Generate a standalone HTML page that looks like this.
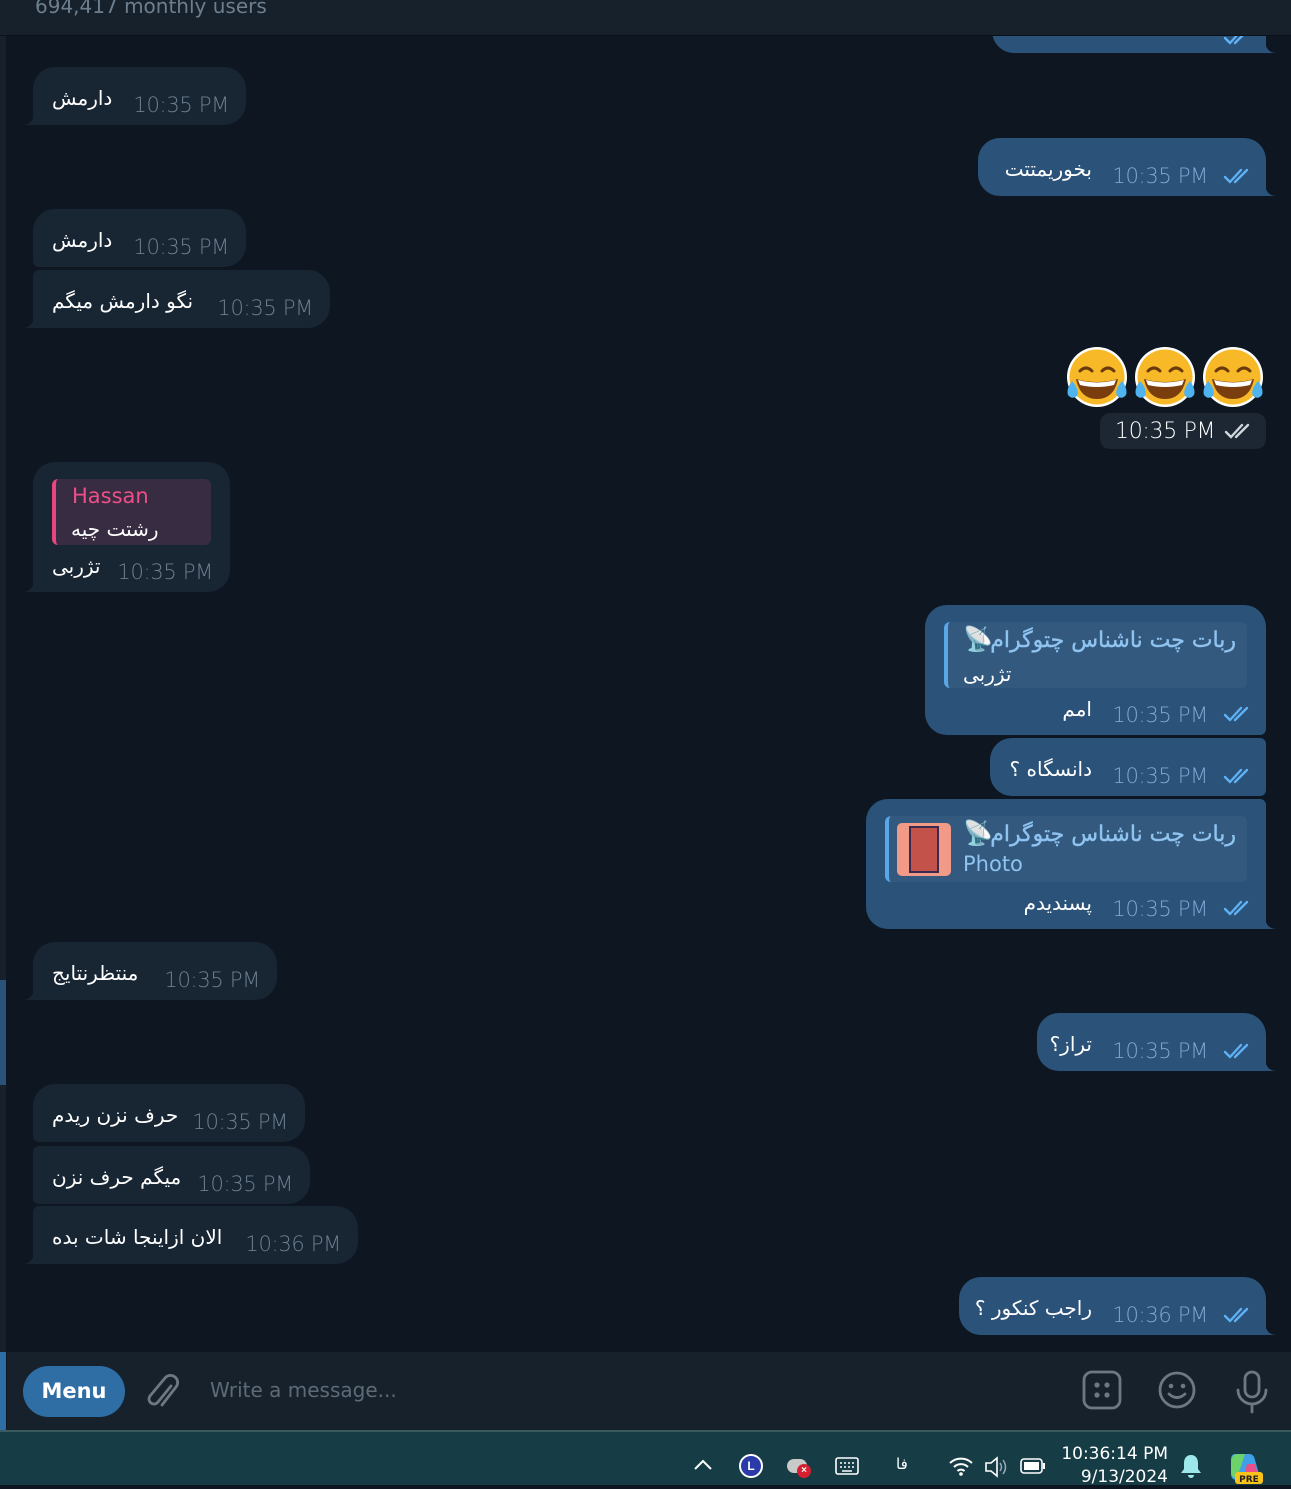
<!DOCTYPE html>
<html><head><meta charset="utf-8"><style>
*{margin:0;padding:0;box-sizing:border-box}
body{width:1291px;height:1485px;background:#0e1621;position:relative;overflow:hidden;font-family:"Liberation Sans","DejaVu Sans",sans-serif}
.b{position:absolute;border-radius:22px 22px 22px 0;background:#182533}
.b.o{background:#2b5278;border-radius:22px 22px 0 22px}
.tl{position:absolute;left:-11px;bottom:0;width:12px;height:14px}
.tr{position:absolute;right:-11px;bottom:0;width:12px;height:14px}
.t{position:absolute;color:#fff;font-size:20px;line-height:26px;direction:rtl;white-space:nowrap;font-family:"DejaVu Sans",sans-serif}
.tm{position:absolute;color:#6d7f8f;font-size:21px;line-height:26px;white-space:nowrap;font-family:"DejaVu Sans",sans-serif;font-weight:300;letter-spacing:-0.3px}
.o .tm{color:#7da8d3}
.ck{position:absolute;right:11px;width:32px;height:20px}
.rp{position:absolute;background:#33597f;border-radius:6px;border-left:4px solid #5aa7e8}
.rt{position:absolute;color:#8fc3f0;font-size:22px;line-height:26px;direction:rtl;white-space:nowrap;font-family:"DejaVu Sans",sans-serif;-webkit-text-stroke:0.4px #8fc3f0}
.sat{position:absolute;font-size:24px;line-height:26px}
</style></head><body>
<div style="position:absolute;left:0;top:36px;width:6px;height:1396px;background:#17212b"></div>
<div style="position:absolute;left:0;top:980px;width:6px;height:105px;background:#2b5278"></div>

<svg width="0" height="0" style="position:absolute"><defs>
<symbol id="ck" viewBox="0 0 32 20"><path d="M2 11l5 5L18 4M12 16L24 4" fill="none" stroke="#5fb1f5" stroke-width="2.4" stroke-linecap="round" stroke-linejoin="round"/></symbol>
</defs></svg>

<div class="b o" style="left:992px;top:10px;width:274px;height:43px;border-radius:0 0 0 22px">
<svg class="tr" viewBox="0 0 12 14"><path d="M0 0Q0 14 12 14L0 14Z" fill="#2b5278"/></svg>
<svg class="ck" style="top:17px"><use href="#ck"/></svg></div>
<div style="position:absolute;left:0;top:0;width:1291px;height:36px;background:#17212b;border-bottom:1px solid #0b1118"></div>
<div style="position:absolute;left:35px;top:-6px;color:#6d7f8f;font-size:20px;font-family:'DejaVu Sans',sans-serif">694,417 monthly users</div>

<div class="b" style="left:33px;top:67px;width:213px;height:58px"><svg class="tl" viewBox="0 0 12 14"><path d="M12 0Q12 14 0 14L12 14Z" fill="#182533"/></svg>
<div class="t" style="left:19px;top:18px">دارمش</div><div class="tm" style="right:17px;top:25px">10:35 PM</div></div>

<div class="b o" style="left:978px;top:138px;width:288px;height:58px"><svg class="tr" viewBox="0 0 12 14"><path d="M0 0Q0 14 12 14L0 14Z" fill="#2b5278"/></svg>
<div class="t" style="right:174px;top:18px">بخوریمتتت</div><div class="tm" style="right:58px;top:25px">10:35 PM</div><svg class="ck" style="top:28px"><use href="#ck"/></svg></div>

<div class="b" style="left:33px;top:209px;width:213px;height:58px;border-radius:22px 22px 22px 6px">
<div class="t" style="left:19px;top:18px">دارمش</div><div class="tm" style="right:17px;top:25px">10:35 PM</div></div>
<div class="b" style="left:33px;top:270px;width:297px;height:58px;border-radius:6px 22px 22px 0"><svg class="tl" viewBox="0 0 12 14"><path d="M12 0Q12 14 0 14L12 14Z" fill="#182533"/></svg>
<div class="t" style="left:19px;top:18px">نگو دارمش میگم</div><div class="tm" style="right:17px;top:25px">10:35 PM</div></div>

<svg style="position:absolute;left:1064px;top:345px" width="204" height="64" viewBox="0 0 204 64">
<g id="em"><circle cx="33" cy="32" r="30" fill="#fff"/><circle cx="33" cy="32" r="27.5" fill="#f7b928"/>
<path d="M16 26q6-6 12 0M38 26q6-6 12 0" stroke="#6b3a0c" stroke-width="3" fill="none" stroke-linecap="round"/>
<path d="M12 34q21 6 42 0q-4 20-21 20t-21-20z" fill="#7a3e0e"/><path d="M14 35q19 5 38 0l-2 5q-17 4-34 0z" fill="#fff"/>
<path d="M8 36q-6 8-4 14 4 5 9 1 3-6-5-15z M58 36q6 8 4 14-4 5-9 1-3-6 5-15z" fill="#4fb3f0"/></g>
<use href="#em" x="68"/><use href="#em" x="136"/></svg>
<div style="position:absolute;left:1100px;top:413px;width:166px;height:36px;background:#1c2733;border-radius:10px"></div>
<div class="tm" style="left:1115px;top:419px;color:#fff;font-size:22px">10:35 PM</div>
<svg style="position:absolute;left:1224px;top:421px" width="32" height="20"><path d="M2 11l5 5L18 4M12 16L24 4" fill="none" stroke="#cfd6dc" stroke-width="2.4" stroke-linecap="round"/></svg>

<div class="b" style="left:33px;top:462px;width:197px;height:130px"><svg class="tl" viewBox="0 0 12 14"><path d="M12 0Q12 14 0 14L12 14Z" fill="#182533"/></svg>
<div class="rp" style="left:19px;top:17px;width:159px;height:66px;background:#372c41;border-left-color:#e9457e"></div>
<div style="position:absolute;left:39px;top:22px;color:#ee4f88;font-size:21px;font-family:'DejaVu Sans',sans-serif">Hassan</div>
<div class="t" style="left:38px;top:54px">رشتت چیه</div>
<div class="t" style="left:19px;top:91px">تژربی</div><div class="tm" style="right:17px;top:97px">10:35 PM</div></div>

<div class="b o" style="left:925px;top:605px;width:341px;height:130px;border-radius:22px 22px 6px 22px">
<div class="rp" style="left:19px;top:17px;width:303px;height:66px"></div>
<div class="rt" style="right:30px;top:23px">ربات چت ناشناس چتوگرام</div>
<div class="sat" style="left:38px;top:22px">📡</div>
<div class="t" style="left:38px;top:56px">تژربی</div>
<div class="t" style="right:174px;top:91px">امم</div><div class="tm" style="right:58px;top:97px">10:35 PM</div><svg class="ck" style="top:99px"><use href="#ck"/></svg></div>
<div class="b o" style="left:990px;top:738px;width:276px;height:58px;border-radius:22px 6px 6px 22px">
<div class="t" style="right:174px;top:18px">دانسگاه ؟</div><div class="tm" style="right:58px;top:25px">10:35 PM</div><svg class="ck" style="top:28px"><use href="#ck"/></svg></div>
<div class="b o" style="left:866px;top:799px;width:400px;height:130px;border-radius:22px 6px 0 22px"><svg class="tr" viewBox="0 0 12 14"><path d="M0 0Q0 14 12 14L0 14Z" fill="#2b5278"/></svg>
<div class="rp" style="left:19px;top:17px;width:362px;height:66px"></div>
<div style="position:absolute;left:31px;top:24px;width:54px;height:53px;border-radius:5px;background:#f29a88;overflow:hidden"><div style="margin:3px 12px;height:47px;background:#c2524a;border:2px solid #3a2a50"></div></div>
<div class="rt" style="right:30px;top:23px">ربات چت ناشناس چتوگرام</div>
<div class="sat" style="left:97px;top:22px">📡</div>
<div style="position:absolute;left:97px;top:53px;color:#8fc3f0;font-size:21px;font-family:'DejaVu Sans',sans-serif">Photo</div>
<div class="t" style="right:174px;top:91px">پسندیدم</div><div class="tm" style="right:58px;top:97px">10:35 PM</div><svg class="ck" style="top:99px"><use href="#ck"/></svg></div>

<div class="b" style="left:33px;top:942px;width:244px;height:58px"><svg class="tl" viewBox="0 0 12 14"><path d="M12 0Q12 14 0 14L12 14Z" fill="#182533"/></svg>
<div class="t" style="left:19px;top:18px">منتظرنتایج</div><div class="tm" style="right:17px;top:25px">10:35 PM</div></div>

<div class="b o" style="left:1037px;top:1013px;width:229px;height:58px"><svg class="tr" viewBox="0 0 12 14"><path d="M0 0Q0 14 12 14L0 14Z" fill="#2b5278"/></svg>
<div class="t" style="right:174px;top:18px">تراز؟</div><div class="tm" style="right:58px;top:25px">10:35 PM</div><svg class="ck" style="top:28px"><use href="#ck"/></svg></div>

<div class="b" style="left:33px;top:1084px;width:272px;height:58px;border-radius:22px 22px 22px 6px">
<div class="t" style="left:19px;top:18px">حرف نزن ریدم</div><div class="tm" style="right:17px;top:25px">10:35 PM</div></div>
<div class="b" style="left:33px;top:1146px;width:277px;height:58px;border-radius:6px 22px 22px 6px">
<div class="t" style="left:19px;top:18px">میگم حرف نزن</div><div class="tm" style="right:17px;top:25px">10:35 PM</div></div>
<div class="b" style="left:33px;top:1206px;width:325px;height:58px;border-radius:6px 22px 22px 0"><svg class="tl" viewBox="0 0 12 14"><path d="M12 0Q12 14 0 14L12 14Z" fill="#182533"/></svg>
<div class="t" style="left:19px;top:18px">الان ازاینجا شات بده</div><div class="tm" style="right:17px;top:25px">10:36 PM</div></div>

<div class="b o" style="left:959px;top:1277px;width:307px;height:58px"><svg class="tr" viewBox="0 0 12 14"><path d="M0 0Q0 14 12 14L0 14Z" fill="#2b5278"/></svg>
<div class="t" style="right:174px;top:18px">راجب کنکور ؟</div><div class="tm" style="right:58px;top:25px">10:36 PM</div><svg class="ck" style="top:28px"><use href="#ck"/></svg></div>

<div style="position:absolute;left:7px;top:1352px;width:1284px;height:79px;background:#17212b"></div>
<div style="position:absolute;left:0;top:1352px;width:6px;height:80px;background:#2f6ea5"></div>
<div style="position:absolute;left:23px;top:1366px;width:102px;height:51px;border-radius:26px;background:#2f6ea5;color:#fff;font-size:21px;font-weight:bold;line-height:51px;text-align:center;font-family:'DejaVu Sans',sans-serif">Menu</div>
<svg style="position:absolute;left:145px;top:1372px" width="36" height="40" viewBox="0 0 36 40"><path d="M26 14L13 30a5 5 0 0 1-8-6L20 6a7 7 0 0 1 11 9L17 33" fill="none" stroke="#6c7883" stroke-width="2.8" stroke-linecap="round"/></svg>
<div style="position:absolute;left:210px;top:1378px;color:#5d6b78;font-size:20px;font-family:'DejaVu Sans',sans-serif">Write a message...</div>
<svg style="position:absolute;left:1082px;top:1370px" width="40" height="40"><rect x="2" y="2" width="36" height="36" rx="8" fill="none" stroke="#6c7883" stroke-width="2.8"/><circle cx="15" cy="15" r="2.6" fill="#6c7883"/><circle cx="25" cy="15" r="2.6" fill="#6c7883"/><circle cx="15" cy="25" r="2.6" fill="#6c7883"/><circle cx="25" cy="25" r="2.6" fill="#6c7883"/></svg>
<svg style="position:absolute;left:1157px;top:1370px" width="40" height="40"><circle cx="20" cy="20" r="17" fill="none" stroke="#6c7883" stroke-width="2.8"/><circle cx="14" cy="16" r="2.3" fill="#6c7883"/><circle cx="26" cy="16" r="2.3" fill="#6c7883"/><path d="M12 24q8 7 16 0" fill="none" stroke="#6c7883" stroke-width="2.8" stroke-linecap="round"/></svg>
<svg style="position:absolute;left:1234px;top:1370px" width="36" height="44"><rect x="11" y="2" width="14" height="25" rx="7" fill="none" stroke="#6c7883" stroke-width="2.8"/><path d="M4 20a14 14 0 0 0 28 0M18 34v8" fill="none" stroke="#6c7883" stroke-width="2.8" stroke-linecap="round"/></svg>

<div style="position:absolute;left:0;top:1430px;width:1291px;height:2px;background:#3a5a60"></div>
<div style="position:absolute;left:0;top:1432px;width:1291px;height:53px;background:#163d45"></div>
<svg style="position:absolute;left:692px;top:1458px" width="22" height="14"><path d="M3 11l8-8 8 8" fill="none" stroke="#fff" stroke-width="2"/></svg>
<div style="position:absolute;left:739px;top:1454px;width:24px;height:24px;border-radius:50%;background:#2a3aa8;border:2px solid #fff;color:#fff;font-size:12px;font-weight:bold;text-align:center;line-height:20px">L</div>
<div style="position:absolute;left:787px;top:1459px;width:20px;height:14px;border-radius:8px;background:#c9c9c9"></div>
<div style="position:absolute;left:797px;top:1464px;width:14px;height:14px;border-radius:50%;background:#d42030;color:#fff;font-size:10px;text-align:center;line-height:14px;font-weight:bold">×</div>
<svg style="position:absolute;left:835px;top:1457px" width="24" height="18"><rect x="1" y="1" width="22" height="16" rx="2" fill="none" stroke="#fff" stroke-width="1.6"/><path d="M5 6h2M9 6h2M13 6h2M17 6h2M5 10h2M9 10h2M13 10h2M17 10h2M7 14h10" stroke="#fff" stroke-width="1.5"/></svg>
<div style="position:absolute;left:896px;top:1455px;color:#fff;font-size:15px;font-family:'DejaVu Sans',sans-serif">فا</div>
<svg style="position:absolute;left:948px;top:1455px" width="26" height="22"><path d="M2 8a16 16 0 0 1 22 0M6 12a10 10 0 0 1 14 0M9.5 16a5 5 0 0 1 7 0" fill="none" stroke="#fff" stroke-width="2"/><circle cx="13" cy="19" r="1.8" fill="#fff"/></svg>
<svg style="position:absolute;left:984px;top:1455px" width="26" height="24"><path d="M2 8h5l6-5v18l-6-5H2z" fill="none" stroke="#fff" stroke-width="1.6"/><path d="M16 8q3 4 0 8M19 5q5 7 0 14" fill="none" stroke="#9ab" stroke-width="1.5"/></svg>
<svg style="position:absolute;left:1020px;top:1457px" width="26" height="18"><rect x="1" y="2" width="21" height="14" rx="3" fill="none" stroke="#fff" stroke-width="1.6"/><rect x="4" y="5" width="15" height="8" fill="#fff"/><rect x="23" y="6" width="2" height="6" fill="#fff"/></svg>
<div style="position:absolute;left:1060px;top:1443px;width:108px;color:#fff;font-size:17px;text-align:right;line-height:23px;font-family:'DejaVu Sans',sans-serif">10:36:14 PM<br>9/13/2024</div>
<svg style="position:absolute;left:1180px;top:1453px" width="22" height="26"><path d="M11 2c-5 0-7 4-7 8v6l-3 4h20l-3-4v-6c0-4-2-8-7-8z" fill="#9ce8ea"/><path d="M8 22a3 3 0 0 0 6 0z" fill="#9ce8ea"/></svg>
<svg style="position:absolute;left:1227px;top:1450px" width="38" height="35"><path d="M8 4h14q5 0 6 6l4 14q1 6-5 6H10q-6 0-6-6L4 10q0-6 4-6z" fill="#3fa0e8"/><path d="M4 12q0-8 8-8h6L10 28q-6 0-6-6z" fill="#6cd36a"/><path d="M20 14h8l3 10q1 6-5 6H16z" fill="#e8508a"/><rect x="8" y="22" width="28" height="12" rx="3" fill="#f6c21b"/><text x="22" y="32" font-size="9" font-weight="bold" text-anchor="middle" fill="#222" font-family="DejaVu Sans">PRE</text></svg>
</body></html>
